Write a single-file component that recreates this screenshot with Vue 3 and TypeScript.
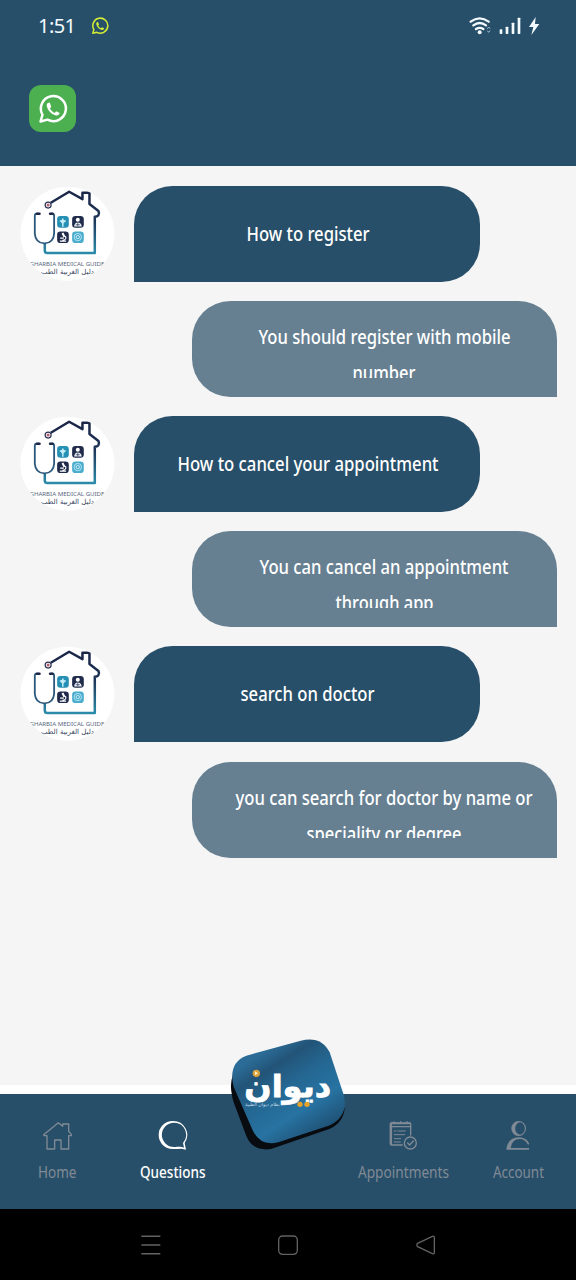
<script setup lang="ts">
interface Line {
  text: string
  width: number
}
interface Message {
  question: Line
  answer: Line[]
}
interface Tab {
  id: string
  label: string
  width: number
}

const messages: Message[] = [
  {
    question: { text: 'How to register', width: 123 },
    answer: [
      { text: 'You should register with mobile', width: 252 },
      { text: 'number', width: 63 },
    ],
  },
  {
    question: { text: 'How to cancel your appointment', width: 261 },
    answer: [
      { text: 'You can cancel an appointment', width: 249 },
      { text: 'through app', width: 98 },
    ],
  },
  {
    question: { text: 'search on doctor', width: 134 },
    answer: [
      { text: 'you can search for doctor by name or', width: 297 },
      { text: 'speciality or degree', width: 155 },
    ],
  },
]

const tabs: Tab[] = [
  { id: 'home', label: 'Home', width: 38.5 },
  { id: 'questions', label: 'Questions', width: 65.5 },
  { id: 'center', label: '', width: 0 },
  { id: 'appointments', label: 'Appointments', width: 91 },
  { id: 'account', label: 'Account', width: 51 },
]
</script>

<template>
  <div class="screen">
    <header class="top">
      <div class="status">
        <svg class="clock" width="38" height="24" viewBox="0 0 38 24">
          <text x="0" y="18.800" textLength="38" lengthAdjust="spacing">1:51</text>
        </svg>
        <svg class="wa-small" width="18" height="18" viewBox="0 0 24 24">
          <path class="wa-ring" d="M2.4 21.8 3.8 16.6A10 10 0 1 1 7.8 20.4Z" />
          <path class="wa-phone" d="M8.4 6.8C7.4 7.2 6.8 8.5 7.1 10c.7 3.4 4 6.700 7.4 7.200 1.600.2 2.900-.7 3-2.100l-2.900-1.500-1.400 1.300c-1.600-.7-2.900-2-3.600-3.500l1.100-1.400-1.200-3z" />
        </svg>
        <svg class="signals" width="76" height="24" viewBox="22 42 228 72">
          <g fill="none" stroke="#f4fbff" stroke-width="7" stroke-linecap="round">
            <path d="M93 65Q120 45 147 65" />
            <path d="M101 76Q120 62 139 76" />
            <path d="M109 87Q120 80 131 87" />
          </g>
          <circle cx="120" cy="97" r="6" fill="#f4fbff" />
          <path d="M143 86l4-5 4 5M143 92l4 5 4-5" fill="none" stroke="#a9c4d3" stroke-width="3" />
          <g fill="#f4fbff">
            <rect x="180" y="88" width="8" height="14" rx="2" />
            <rect x="198" y="80" width="8" height="22" rx="2" />
            <rect x="216" y="68" width="8" height="34" rx="2" />
            <rect x="234" y="53" width="8" height="49" rx="2" />
          </g>
        </svg>
        <svg class="bolt" width="12" height="20" viewBox="264 48 36 60">
          <path d="M287 51 267 81h13l-6 24 24-33h-13z" fill="#f4fbff" />
        </svg>
      </div>
      <div class="wa-button">
        <svg width="30" height="30" viewBox="0 0 24 24">
          <path class="wa-ring" d="M2 22 3.600 16.600A10 10 0 1 1 7.600 20.500Z" />
          <path class="wa-phone" d="M8.200 7C7.200 7.400 6.800 8.700 7.100 10c.9 3.500 4 6.500 7.400 7.100 1.500.2 2.700-.7 2.800-2l-2.700-1.400-1.400 1.400c-1.600-.7-2.900-2-3.600-3.500l1-1.400L9.500 7z" />
        </svg>
      </div>
    </header>

    <main class="chat">
      <template v-for="m in messages" :key="m.question.text">
        <div class="row">
          <svg class="avatar" width="96" height="96" viewBox="27.600 31.800 288 288">
            <defs>
              <linearGradient id="house" x1="0" y1="0" x2="0" y2="1">
                <stop offset="0" stop-color="#1b2547" />
                <stop offset=".45" stop-color="#1d3456" />
                <stop offset="1" stop-color="#2c8bab" />
              </linearGradient>
              <clipPath id="disc"><circle cx="173" cy="175" r="141" /></clipPath>
            </defs>
            <circle cx="173" cy="175" r="141" fill="#fff" />
            <g clip-path="url(#disc)">
              <path d="M123 82 178 49 218 71V52h21v34l27 21c5 10-2 17-11 17v109H113q-8 0-8-7V203" fill="none" stroke="url(#house)" stroke-width="7.500" stroke-linejoin="round" />
              <circle cx="115" cy="89" r="9" fill="#fff" stroke="#28304f" stroke-width="3.500" />
              <circle cx="115" cy="89" r="4.500" fill="#b35c72" />
              <path d="M87 115H79Q75 115 75 123V175Q77 203 104 204Q131 203 133 175V123Q133 115 129 115H122" fill="none" stroke="#2c587c" stroke-width="5.500" />
              <path d="M82 115h7M121 115h7" stroke="#1c2647" stroke-width="8" stroke-linecap="round" />
              <rect x="142" y="122" width="35" height="35" rx="10" fill="#258fb4" />
              <rect x="187" y="122" width="35" height="35" rx="10" fill="#202b4b" />
              <rect x="142" y="168" width="35" height="35" rx="10" fill="#202b4b" />
              <rect x="187" y="168" width="35" height="35" rx="10" fill="#4aadce" />
              <path d="M159 129v25M150 137h18" stroke="#c4ecf6" stroke-width="4.500" />
              <circle cx="159" cy="138" r="6" fill="#c4ecf6" />
              <circle cx="204" cy="133" r="6" fill="#fff" />
              <path d="M193 153q1-12 11-12t12 12z" fill="#e9eff4" />
              <path d="M204 141v12M198 148h12" stroke="#202b4b" stroke-width="2" />
              <path d="M158 173l6 12" stroke="#fff" stroke-width="6" />
              <path d="M150 197h19M158 195q14-2 9-13M151 188h11" fill="none" stroke="#fff" stroke-width="3.500" />
              <circle cx="204" cy="185" r="11" fill="none" stroke="#c7edf7" stroke-width="2.500" />
              <circle cx="204" cy="185" r="5" fill="none" stroke="#e0f7fb" stroke-width="2.500" />
              <text class="guide" x="59" y="271" textLength="225" lengthAdjust="spacingAndGlyphs">GHARBIA MEDICAL GUIDE</text>
              <text class="guide-ar" x="173" y="296" text-anchor="middle">دليل الغربية الطب</text>
            </g>
          </svg>
          <div class="bubble question">
            <svg class="line" :width="m.question.width" height="36">
              <text x="0.500" y="24.700" :textLength="m.question.width" lengthAdjust="spacingAndGlyphs">{{ m.question.text }}</text>
            </svg>
          </div>
        </div>
        <div class="bubble answer">
          <div class="answer-text">
            <svg v-for="l in m.answer" :key="l.text" class="line" :width="l.width" height="36">
              <text x="0.500" y="23.600" :textLength="l.width" lengthAdjust="spacingAndGlyphs">{{ l.text }}</text>
            </svg>
          </div>
        </div>
      </template>
    </main>

    <nav class="tabs">
      <div v-for="t in tabs" :key="t.id" class="tab" :class="{ active: t.id === 'questions' }">
        <svg v-if="t.id === 'home'" class="icon" width="32" height="32" viewBox="126 116 96 96">
          <path d="M131 163 175 127 188 138V131h18v22l8 9v4h-8v40h-23v-27h-19v27h-23v-40h-9z" fill="none" stroke="currentColor" stroke-width="4" stroke-linejoin="round" />
        </svg>
        <svg v-else-if="t.id === 'questions'" class="icon" width="32" height="32" viewBox="470 116 96 96">
          <path fill-rule="evenodd" fill="currentColor" d="M517 122a42 42 0 0 0 0 84c10 0 19-1 27-1l13 3-4-20a42 42 0 0 0-36-66ZM521 127a35.500 36.500 0 0 1 27 61l3 14c-10-4-16-2-30-2a36.500 36.500 0 0 1 0-73Z" />
        </svg>
        <svg v-else-if="t.id === 'appointments'" class="icon" width="32" height="32" viewBox="141 116 96 96">
          <g fill="none" stroke="currentColor" stroke-width="4" stroke-linecap="round">
            <path d="M187 194H155q-4 0-4-4V132q0-4 4-4H208q4 0 4 4V164" />
            <path d="M153 130V191" stroke-width="6.500" />
            <path d="M153 129H211" stroke-width="5.500" />
            <path d="M151 139H212M162 124v5M182 124v5M201 124v5" stroke-width="4" />
            <path d="M163 152h5M174 152h22M163 163h31M163 175h19M163 185h18" stroke-width="3" />
            <circle cx="211" cy="188" r="18" />
            <path d="M203 188l6 6 11-12" />
          </g>
        </svg>
        <svg v-else-if="t.id === 'account'" class="icon" width="32" height="32" viewBox="487 116 96 96">
          <path fill-rule="evenodd" fill="currentColor" d="M537 122a22 22.500 0 1 0 0 45 22 22.500 0 1 0 0-45ZM541 126a14.500 18.500 0 0 1 0 37 14.500 18.500 0 0 1 0-37Z" />
          <path fill-rule="evenodd" fill="currentColor" d="M500 208q4-36 37-37 24 0 32 20l-4 2q-8-17-25-17-23 0-27 27h55v5z" />
        </svg>
        <svg v-if="t.label" class="label" :width="t.width" height="24">
          <text x="0" y="18" :textLength="t.width" lengthAdjust="spacingAndGlyphs">{{ t.label }}</text>
        </svg>
      </div>

      <svg class="brand" width="145" height="130" viewBox="0 0 435 390">
        <defs>
          <linearGradient id="tile" x1="0.100" y1="0" x2="0.800" y2="1">
            <stop offset="0" stop-color="#2a6f9b" />
            <stop offset=".16" stop-color="#2b6c97" />
            <stop offset=".3" stop-color="#235478" />
            <stop offset=".48" stop-color="#246792" />
            <stop offset=".7" stop-color="#2773a2" />
            <stop offset="1" stop-color="#1d4666" />
          </linearGradient>
        </defs>
        <path d="M54 135Q44 160 50 190Q52 207 57 220L94 318Q113 365 168 357L345 296Q385 278 389 235L300 200Z" fill="#080c10" />
        <path d="M94 77 257 32Q318 16 344 67L387 197Q400 258 345 286L190 337Q137 351 113 301L56 170Q38 99 94 77Z" fill="url(#tile)" />
        <text class="brand-name" transform="translate(88 201) scale(1.200 1.160)" x="0" y="0" direction="ltr">ديوان</text>
        <circle cx="124" cy="130" r="11" fill="#dba33c" />
        <path d="M120 124l9 6-9 6z" fill="#fff1c8" />
        <circle cx="255" cy="223" r="8" fill="#e5a329" />
        <circle cx="276" cy="223" r="8" fill="#e5a329" />
        <text class="brand-sub" x="90" y="227">نظام ديوان الطبية</text>
      </svg>
    </nav>

    <footer class="system">
      <svg width="24" height="24" viewBox="116 68 72 72">
        <path d="M123 78h57M123 104h57M123 130h57" stroke="#626262" stroke-width="4.500" />
      </svg>
      <svg width="24" height="24" viewBox="528 68 72 72">
        <rect x="536" y="77" width="56" height="55" rx="12" fill="none" stroke="#626262" stroke-width="4" />
      </svg>
      <svg width="24" height="24" viewBox="941 68 72 72">
        <path d="M952 99 996 78q6-2 6 4v44q0 6-6 4L952 109q-5-5 0-10z" fill="none" stroke="#626262" stroke-width="4" />
      </svg>
    </footer>
  </div>
</template>

<style>
body {
  margin: 0;
}
</style>

<style scoped>
.screen {
  width: 576px;
  height: 1280px;
  display: flex;
  flex-direction: column;
  overflow: hidden;
  background: #fff;
  font-family: 'Noto Sans', 'DejaVu Sans', sans-serif;
}
svg {
  display: block;
  flex: none;
}
.top {
  height: 166px;
  box-sizing: border-box;
  background: #284f69;
}
.status {
  height: 52px;
  display: flex;
  align-items: center;
  padding-left: 38px;
}
.clock {
  overflow: visible;
}
.clock text {
  font: 400 20px 'Noto Sans', sans-serif;
  fill: #f4fbff;
}
.wa-small {
  margin-left: 15px;
}
.wa-small .wa-ring {
  stroke: #d3ed32;
}
.wa-small .wa-phone {
  fill: #d3ed32;
}
.wa-ring {
  fill: none;
  stroke: #fff;
  stroke-width: 2;
  stroke-linejoin: round;
}
.wa-phone {
  fill: #fff;
}
.signals {
  margin-left: 338px;
}
.bolt {
  margin-left: 5px;
}
.wa-button {
  width: 47px;
  height: 47px;
  margin: 33px 0 0 29px;
  border-radius: 12px;
  background: #4caf50;
  display: flex;
  align-items: center;
  justify-content: center;
}
.chat {
  height: 919px;
  box-sizing: border-box;
  padding: 19.600px 19.200px 0;
  background: #f5f5f5;
  display: flex;
  flex-direction: column;
  gap: 19.200px;
}
.row {
  display: flex;
  gap: 19.200px;
}
.bubble {
  height: 96px;
  box-sizing: border-box;
}
.question {
  width: 345.600px;
  display: flex;
  align-items: center;
  justify-content: center;
  border-radius: 38.400px 38.400px 38.400px 0;
  background: #284f69;
}
.answer {
  width: 365px;
  align-self: flex-end;
  padding: 19.200px 19.200px 19.200px 38.400px;
  border-radius: 38.400px 38.400px 0 38.400px;
  background: #668092;
}
.answer-text {
  height: 57.600px;
  overflow: hidden;
  display: flex;
  flex-direction: column;
  align-items: center;
}
.line {
  overflow: visible;
}
.line text {
  font-size: 19.500px;
  font-weight: 500;
  fill: #fff;
}
.guide {
  font-size: 17px;
  fill: #59677d;
}
.guide-ar {
  font: 21px 'DejaVu Sans', sans-serif;
  fill: #35445b;
}
.tabs {
  position: relative;
  height: 115px;
  margin-top: 9px;
  background: #284f69;
  display: grid;
  grid-template-columns: repeat(5, 1fr);
}
.tab {
  display: flex;
  flex-direction: column;
  align-items: center;
  padding-top: 25px;
  color: #808a95;
}
.active {
  color: #fff;
}
.label {
  margin-top: 9px;
  overflow: visible;
}
.label text {
  font-size: 16px;
  fill: currentColor;
}
.active .label text {
  font-weight: 500;
}
.brand {
  position: absolute;
  left: 215px;
  top: -64px;
}
.brand-name {
  font: 700 80px 'DejaVu Sans', sans-serif;
  fill: #fff;
  stroke: #fff;
  stroke-width: 2;
}
.brand-sub {
  font: 14px 'DejaVu Sans', sans-serif;
  fill: #c4dae7;
}
.system {
  height: 71px;
  box-sizing: border-box;
  padding: 0 138.500px;
  background: #000;
  display: flex;
  align-items: center;
  justify-content: space-between;
}
</style>
